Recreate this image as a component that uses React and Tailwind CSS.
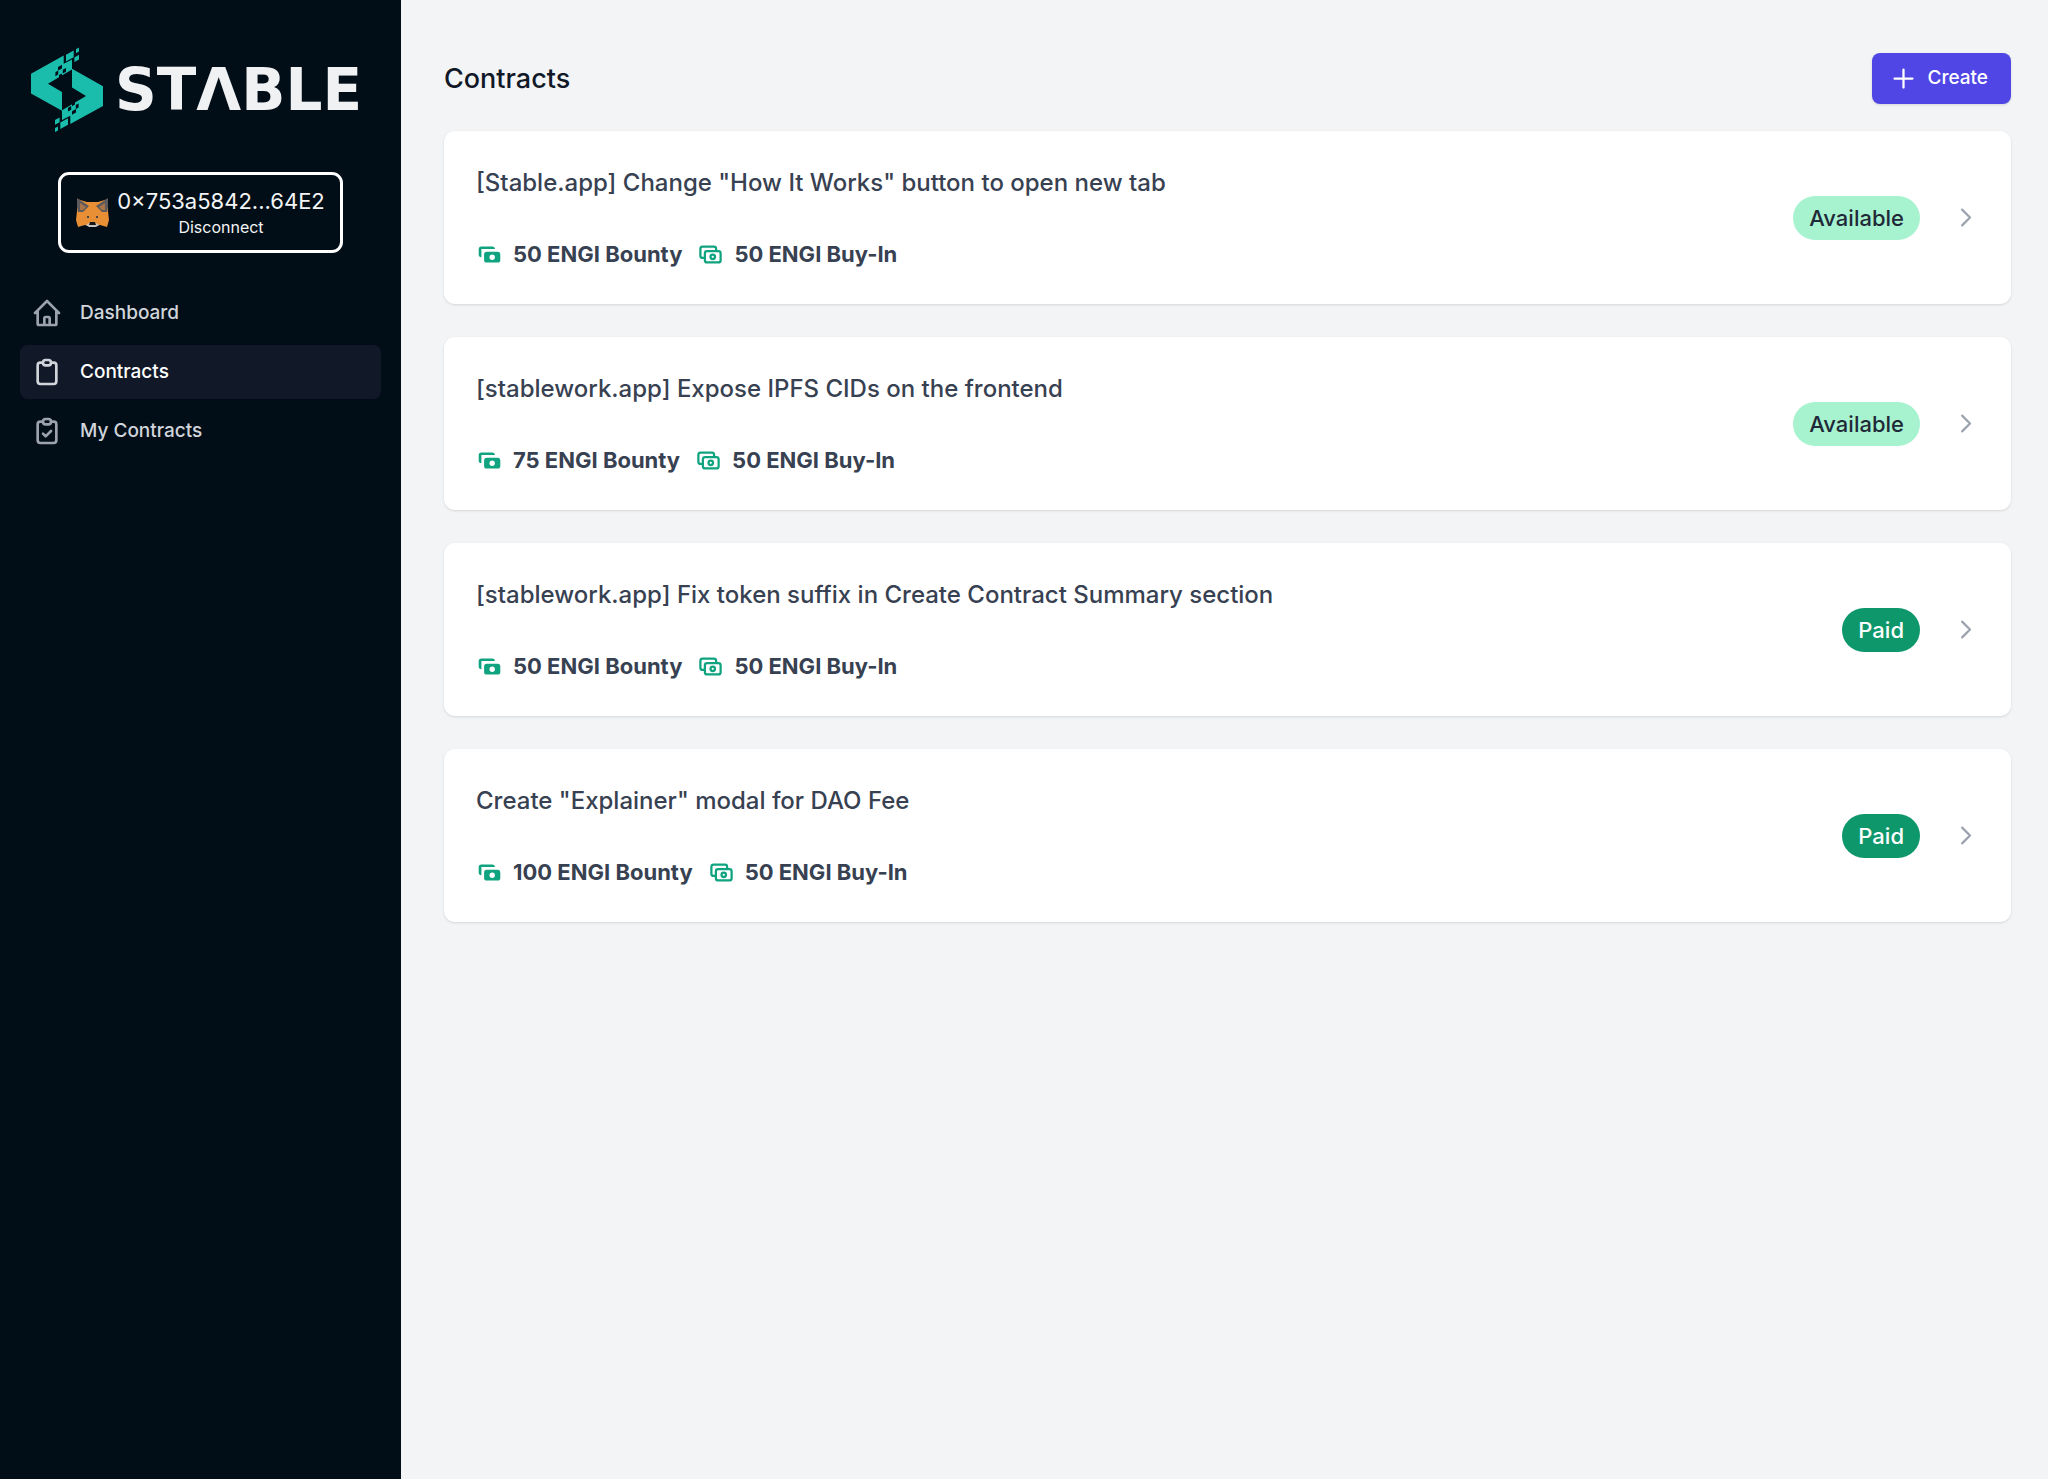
import {
  HiCash,
  HiOutlineCash,
  HiOutlineChevronRight,
  HiOutlineClipboard,
  HiOutlineClipboardCheck,
  HiOutlineHome,
  HiOutlinePlus,
} from 'react-icons/hi';
import clsx from 'clsx';

const navigation = [
  { name: 'Dashboard', href: '#dashboard', icon: HiOutlineHome },
  { name: 'Contracts', href: '#contracts', icon: HiOutlineClipboard, current: true },
  { name: 'My Contracts', href: '#my-contracts', icon: HiOutlineClipboardCheck },
];

const contracts = [
  { id: 1, title: '[Stable.app] Change "How It Works" button to open new tab', bounty: 50, buyIn: 50, status: 'Available' },
  { id: 2, title: '[stablework.app] Expose IPFS CIDs on the frontend', bounty: 75, buyIn: 50, status: 'Available' },
  { id: 3, title: '[stablework.app] Fix token suffix in Create Contract Summary section', bounty: 50, buyIn: 50, status: 'Paid' },
  { id: 4, title: 'Create "Explainer" modal for DAO Fee', bounty: 100, buyIn: 50, status: 'Paid' },
];

const statusStyles = {
  Available: 'bg-[#a7f3d0] text-[#1f2937]',
  Paid: 'bg-[#0d976b] text-white',
};

// One arm of the mark; the other is the same shape turned by 180 degrees
function LogoArm(props) {
  return (
    <g {...props}>
      <path d="M0 26.7 32.7 8.6v8.2L41 12.6v9.8L17 36.7l14 8.3v18.8L0 46.4z" />
      <path d="M35 7.8l7.7-4.2v6.6L35 14.4zM45 2.2 48 .6v4l-3 1.6zM43.4 10.4 48 7.8v4.8L43.4 15z" />
      {/* Gaps between the pixels */}
      <path fill="#010e17" d="M27 20l4-2.2v3.6L27 23.6zM24.4 25.2l2.8-1.6v4l-2.8 1.6zM31.8 22.8l3.2-1.8v3.8L31.8 26.6zM28 28l3-1.6v2.6l5-3v2l-8 4.6z" />
    </g>
  );
}

function LogoMark() {
  return (
    <svg viewBox="0 0 72 86" className="h-[86px] w-18 shrink-0" fill="#1abcab" aria-hidden="true">
      <LogoArm />
      <LogoArm transform="rotate(180 36 42.8)" />
    </svg>
  );
}

function Fox() {
  return (
    <svg viewBox="0 0 33 30" className="h-[30px] w-[33px] shrink-0" aria-hidden="true">
      <path fill="#e88f35" d="M1 1 11 4h11l10-3v12l1 9-2 7-7-2-4 1h-7l-4-1-7 2-2-7 1-9z" />
      <path fill="#5d5a5e" d="M1 0 13 8 7 14H2L1 9zM32 0 20 8l6 6h5l1-5z" />
      <path fill="#a87448" d="M4 5l6 4-3 3H4zM29 5l-6 4 3 3h3z" />
      <path fill="#4a4648" d="M11 18h2v2h-2zM20 18h2v2h-2z" />
      <path fill="#c9c4c0" d="M10 27l3-2h7l3 2-3 2h-7z" />
      <path fill="#161616" d="M14 24h5l1 3h-7z" />
    </svg>
  );
}

function Sidebar() {
  return (
    <aside className="flex w-[401px] shrink-0 flex-col bg-[#010e17]">
      <div className="flex items-center gap-3 px-[31px] pt-[47px]">
        <LogoMark />
        <span className="font-['DejaVu_Sans',sans-serif] text-[58px] leading-none font-bold text-[#f0f1f3]">STΛBLE</span>
      </div>

      <button
        type="button"
        className="mx-auto mt-[39px] flex h-[81px] items-center gap-2 rounded-[11px] border-3 border-white px-[15px] text-[#f3f4f6]"
      >
        <Fox />
        <span className="flex flex-col items-center pt-px">
          <span className="text-[22px] leading-7">0×753a5842...64E2</span>
          <span className="text-base leading-6">Disconnect</span>
        </span>
      </button>

      <nav className="mt-[33px] flex flex-col gap-[5px] px-5">
        {navigation.map((item) => (
          <a
            key={item.name}
            href={item.href}
            aria-current={item.current ? 'page' : undefined}
            className={clsx(
              'flex h-[54px] items-center gap-[17px] rounded-lg px-[11px] text-[19px] font-medium',
              item.current ? 'bg-[#111827] text-white' : 'text-[#d1d5db]'
            )}
          >
            <item.icon className={clsx('size-8', item.current ? 'text-[#d1d5db]' : 'text-[#9ca3af]')} />
            {item.name}
          </a>
        ))}
      </nav>
    </aside>
  );
}

function ContractCard({ contract }) {
  return (
    <li>
      <a href={`#contract-${contract.id}`} className="flex items-center gap-8 rounded-[11px] bg-white p-8 shadow">
        <div className="min-w-0 flex-1">
          <h2 className="truncate text-2xl leading-10 font-medium text-[#374151]">{contract.title}</h2>
          <div className="mt-[33px] flex items-center gap-[15px] text-[22px] leading-9 font-bold text-[#374151]">
            <span className="flex items-center gap-[10px]">
              <HiCash className="size-[27px] text-[#10a37f]" />
              {contract.bounty} ENGI Bounty
            </span>
            <span className="flex items-center gap-[10px]">
              <HiOutlineCash className="size-[27px] text-[#10a37f]" />
              {contract.buyIn} ENGI Buy-In
            </span>
          </div>
        </div>
        <span className={clsx('rounded-full px-4 py-1 text-[22px] leading-9 font-medium', statusStyles[contract.status])}>
          {contract.status}
        </span>
        <HiOutlineChevronRight className="size-[27px] text-[#9ca3af]" />
      </a>
    </li>
  );
}

export default function App() {
  return (
    <div className="flex min-h-screen bg-[#f3f4f6] font-[Inter,sans-serif]">
      <Sidebar />
      <main className="min-w-0 flex-1 pt-[53px] pr-[37px] pl-[43px]">
        <header className="flex items-center justify-between">
          <h1 className="text-[27px] leading-9 font-medium text-[#111827]">Contracts</h1>
          <button
            type="button"
            className="flex h-[51px] items-center gap-[11px] rounded-lg bg-[#4f46e5] pr-[23px] pl-[18px] text-[19px] font-medium text-white shadow-sm"
          >
            <HiOutlinePlus className="size-[27px]" />
            Create
          </button>
        </header>
        <ul className="mt-[27px] flex flex-col gap-[33px]">
          {contracts.map((contract) => (
            <ContractCard key={contract.id} contract={contract} />
          ))}
        </ul>
      </main>
    </div>
  );
}
